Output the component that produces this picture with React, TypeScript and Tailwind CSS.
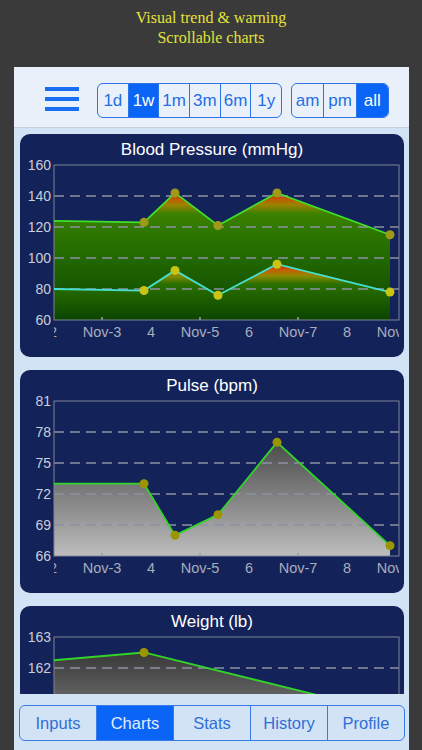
import React from 'react';

const PL = 34;
const PR = 379;
const PT = 31;
const PB = 186;
const XS = [34, 124, 155, 198, 257, 370];

type Stop = [number, string];
type Series = {
  xs: number[];
  vals: number[];
  line: string;
  dot: string;
  gy1: number;
  gy2: number;
  stops: Stop[];
};

type ChartProps = {
  id: string;
  title: string;
  min: number;
  max: number;
  ticks: number[];
  series: Series[];
};

const X_LABELS: [number, string][] = [
  [33, '2'],
  [82, 'Nov-3'],
  [131, '4'],
  [180, 'Nov-5'],
  [229, '6'],
  [278, 'Nov-7'],
  [327, '8'],
  [376, 'Nov-9'],
];

function Chart({ id, title, min, max, ticks, series }: ChartProps) {
  const yOf = (v: number) => PT + ((max - v) / (max - min)) * (PB - PT);

  return (
    <div className="h-[223px] shrink-0 rounded-[10px] bg-[#13235a] overflow-hidden">
      <div className="h-[22px] pt-[5px] text-center text-[17px] leading-[22px] text-white whitespace-nowrap">{title}</div>
      <svg width="384" height="201" viewBox="0 22 384 201" className="block">
        <defs>
          {series.map((s, i) => (
            <linearGradient
              key={i}
              id={`${id}-g${i}`}
              gradientUnits="userSpaceOnUse"
              x1="0"
              x2="0"
              y1={s.gy1}
              y2={s.gy2}
            >
              {s.stops.map(([o, c], j) => (
                <stop key={j} offset={o} stopColor={c} />
              ))}
            </linearGradient>
          ))}
          <clipPath id={`${id}-clip`}>
            <rect x={PL} y={PB} width={PR - PL} height={30} />
          </clipPath>
        </defs>

        {series.map((s, i) => {
          const pts = s.xs.map((x, k) => `${x},${yOf(s.vals[k])}`).join(' L');
          const last = s.xs[s.xs.length - 1];
          return (
            <path
              key={i}
              d={`M${PL},${PB} L${pts} L${last},${PB} Z`}
              fill={`url(#${id}-g${i})`}
            />
          );
        })}

        {ticks.slice(1, -1).map((t) => (
          <line
            key={t}
            x1={PL}
            x2={PR}
            y1={yOf(t)}
            y2={yOf(t)}
            stroke="#8d91a2"
            strokeWidth="1.5"
            strokeDasharray="10 6"
          />
        ))}

        <rect x={PL} y={PT} width={PR - PL} height={PB - PT} fill="none" stroke="#7e8396" strokeWidth="1" />

        {[82, 180, 278].map((x) => (
          <line key={x} x1={x} x2={x} y1={PB - 3} y2={PB} stroke="#9a9eae" strokeWidth="1.5" />
        ))}

        {series.map((s, i) => (
          <g key={i}>
            <polyline
              points={s.xs.map((x, k) => `${x},${yOf(s.vals[k])}`).join(' ')}
              fill="none"
              stroke={s.line}
              strokeWidth="1.8"
            />
            {s.xs.slice(1).map((x, k) => (
              <circle key={k} cx={x} cy={yOf(s.vals[k + 1])} r="4.5" fill={s.dot} />
            ))}
          </g>
        ))}

        {ticks.map((t) => (
          <text key={t} x={31} y={yOf(t) + 5} textAnchor="end" fontSize="14" fill="#cbcdd8">
            {t}
          </text>
        ))}

        <g clipPath={`url(#${id}-clip)`}>
          {X_LABELS.map(([x, l]) => (
            <text key={l} x={x} y={203} textAnchor="middle" fontSize="14.5" fill="#a8acbb">
              {l}
            </text>
          ))}
        </g>
      </svg>
    </div>
  );
}

const greenStops: Stop[] = [
  [0.02, '#c41200'],
  [0.07, '#c65200'],
  [0.12, '#9c8200'],
  [0.19, '#3c8000'],
  [0.34, '#2c7600'],
  [1, '#0b4400'],
];

const diaStops: Stop[] = [
  [0.03, '#c01a00'],
  [0.14, '#c65e00'],
  [0.24, '#8a8a00'],
  [0.38, '#2a7000'],
  [1, '#0b4400'],
];

const grayStops: Stop[] = [
  [0, '#4b4b4b'],
  [1, '#bdbdbd'],
];

function Segments({ items, active, width }: { items: string[]; active: string; width: string }) {
  return (
    <div className={`${width} h-[35px] flex rounded-[6px] border border-[#2a73e8] overflow-hidden`}>
      {items.map((it, i) => (
        <div
          key={it}
          className={`flex-1 flex items-center justify-center text-[17px] ${i > 0 ? 'border-l border-[#2a73e8]' : ''} ${
            it === active ? 'bg-[#0a64f5] text-white' : 'text-[#1f6fe6]'
          }`}
        >
          {it}
        </div>
      ))}
    </div>
  );
}

export default function App() {
  return (
    <div
      className="w-[422px] h-[750px] bg-[#3a3a3a] flex flex-col overflow-hidden"
      style={{ fontFamily: '"Liberation Sans", Arial, sans-serif' }}
    >
      <div
        className="pt-[8px] text-center text-[16px] leading-[20px] text-[#e2e23a]"
        style={{ fontFamily: '"Liberation Serif", "Times New Roman", serif' }}
      >
        Visual trend &amp; warning
        <br />
        Scrollable charts
      </div>

      <div className="mt-[19px] ml-[14px] w-[395px] flex-1 flex flex-col bg-[#d3e3f6]">
        <div className="h-[61px] shrink-0 bg-[#e9f0fa] border-b border-[#c6d0dd] flex items-start pt-[16px] pl-[31px]">
          <div className="w-[34px] h-[35px] pt-[4px] flex flex-col gap-[6px]">
            <div className="h-[4px] bg-[#1a6cf0]" />
            <div className="h-[4px] bg-[#1a6cf0]" />
            <div className="h-[4px] bg-[#1a6cf0]" />
          </div>
          <div className="ml-[18px]">
            <Segments items={['1d', '1w', '1m', '3m', '6m', '1y']} active="1w" width="w-[185px]" />
          </div>
          <div className="ml-[9px]">
            <Segments items={['am', 'pm', 'all']} active="all" width="w-[98px]" />
          </div>
        </div>

        <div className="h-[566px] shrink-0 overflow-hidden pt-[6px] pl-[6px] flex flex-col gap-[13px]">
          <div className="w-[384px]">
            <Chart
              id="bp"
              title="Blood Pressure (mmHg)"
              min={60}
              max={160}
              ticks={[160, 140, 120, 100, 80, 60]}
              series={[
                { xs: XS, vals: [124, 123, 142, 121, 142, 115], line: '#3ee02a', dot: '#9e9a18', gy1: 55, gy2: 186, stops: greenStops },
                { xs: XS, vals: [80, 79, 92, 76, 96, 78], line: '#45e0cf', dot: '#c9c316', gy1: 128, gy2: 186, stops: diaStops },
              ]}
            />
          </div>
          <div className="w-[384px]">
            <Chart
              id="pulse"
              title="Pulse (bpm)"
              min={66}
              max={81}
              ticks={[81, 78, 75, 72, 69, 66]}
              series={[
                { xs: XS, vals: [73, 73, 68, 70, 77, 67], line: '#33d42a', dot: '#9b9600', gy1: 72, gy2: 186, stops: grayStops },
              ]}
            />
          </div>
          <div className="w-[384px]">
            <Chart
              id="wt"
              title="Weight (lb)"
              min={158}
              max={163}
              ticks={[163, 162, 161, 160, 159, 158]}
              series={[
                { xs: [34, 124, 370], vals: [162.25, 162.5, 160.55], line: '#33d42a', dot: '#9b9600', gy1: 46, gy2: 186, stops: [[0, '#383838'], [1, '#bdbdbd']] },
              ]}
            />
          </div>
        </div>

        <div className="flex-1 pt-[11px] pl-[5px]">
          <div className="w-[386px] h-[36px] flex rounded-[6px] border border-[#3a7ae8] overflow-hidden">
            {['Inputs', 'Charts', 'Stats', 'History', 'Profile'].map((t, i) => (
              <div
                key={t}
                className={`flex-1 flex items-center justify-center text-[16.5px] ${i > 0 ? 'border-l border-[#3a7ae8]' : ''} ${
                  t === 'Charts' ? 'bg-[#0a64f5] text-[#e3ecff]' : 'text-[#2f6fd6]'
                }`}
              >
                {t}
              </div>
            ))}
          </div>
        </div>
      </div>
    </div>
  );
}
